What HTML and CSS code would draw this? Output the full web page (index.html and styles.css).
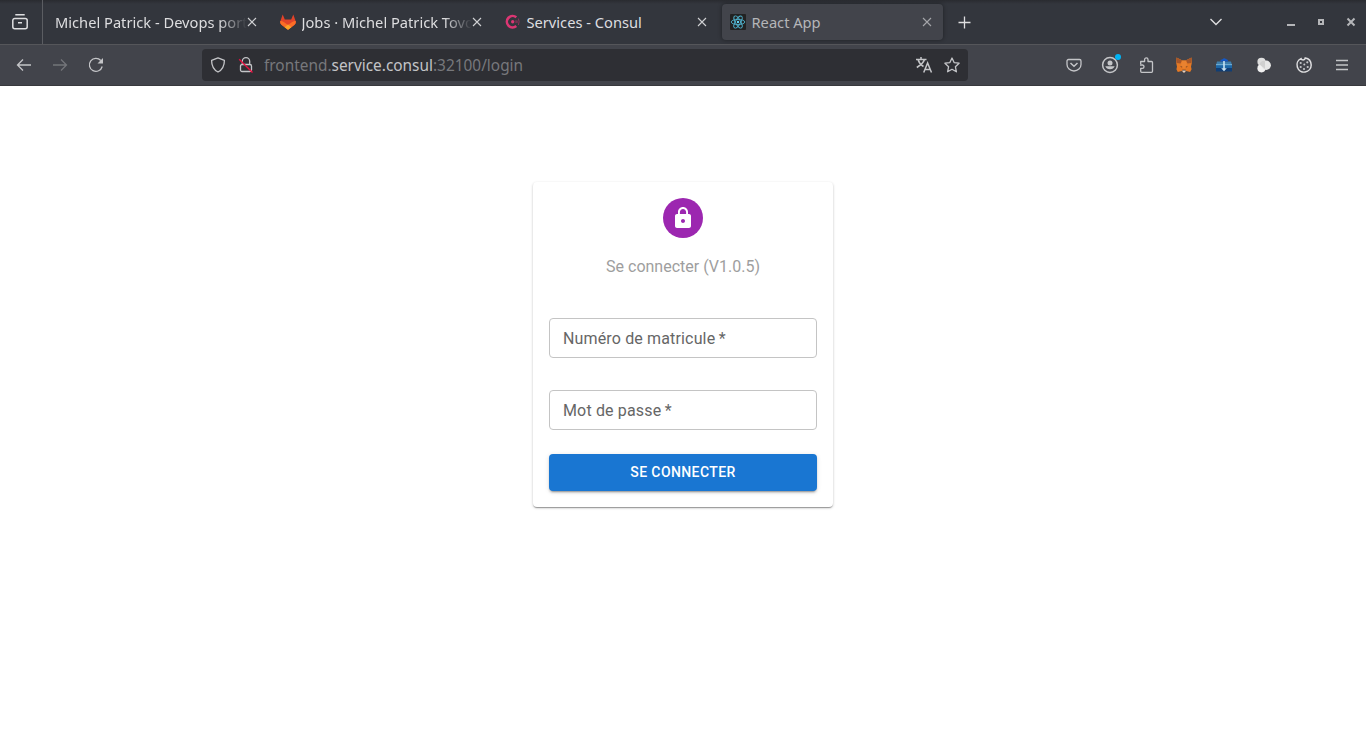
FILE: index.html
```html
<!DOCTYPE html>
<html lang="fr">
<head>
<meta charset="utf-8">
<title>React App</title>
<link rel="stylesheet" href="styles.css">
</head>
<body>
<header class="browser">
  <div class="tabbar">
    <div class="tab-view">
      <svg class="icon" viewBox="0 0 16 16"><path d="M3.300.8h9.400M2.800 4.500h10.400a2 2 0 0 1 2 2v6.200a2 2 0 0 1-2 2H2.800a2 2 0 0 1-2-2V6.500a2 2 0 0 1 2-2zM6 8.700h4" stroke-width="1.500"/></svg>
    </div>
    <div class="tabs">
      <div class="tab">
        <span class="tab-title fade">Michel Patrick - Devops portfolio</span>
        <svg class="close" viewBox="0 0 10 10"><path d="M1 1l8 8M9 1L1 9"/></svg>
      </div>
      <div class="tab">
        <svg class="favicon" viewBox="0 0 16 16"><path fill="#e24329" d="M2.700.4 4.800 5.500h6.400L13.300.4l2.300 6.500c.5 1.600 0 3.200-1.300 4.100L8 15.700 1.700 11C.4 10.100-.1 8.500.4 6.900z"/><path fill="#fc6d26" d="M.3 7C2.700 7.200 4.200 8 8 11c3.800-3 5.300-3.800 7.700-4 .4 1.600-.1 3.100-1.400 4L8 15.700 1.700 11C.4 10.100-.1 8.600.3 7z"/><path fill="#fca326" d="m4.600 13.200 3.400-2.600 3.400 2.600L8 15.700z"/></svg>
        <span class="tab-title fade">Jobs · Michel Patrick Tovoson</span>
        <svg class="close" viewBox="0 0 10 10"><path d="M1 1l8 8M9 1L1 9"/></svg>
      </div>
      <div class="tab">
        <svg class="favicon" viewBox="0 0 16 16"><path d="M11.300 3.300A5.700 5.700 0 1 0 11.300 12" fill="none" stroke="#dc3673" stroke-width="2.600"/><circle cx="7.700" cy="7.700" r="1.700" fill="#dc3673"/><path d="M11 6.300v2.800M13.400 4.600q1.400 3 0 6.400M12.100 6.500v2.400" stroke="#a82f61" fill="none" stroke-width=".8"/></svg>
        <span class="tab-title">Services - Consul</span>
        <svg class="close" viewBox="0 0 10 10"><path d="M1 1l8 8M9 1L1 9"/></svg>
      </div>
      <div class="tab active">
        <svg class="favicon" viewBox="0 0 16 16"><rect width="16" height="16" rx="1" fill="#222"/><g fill="none" stroke="#4fb1cc" stroke-width=".9"><ellipse cx="8" cy="8" rx="6.800" ry="2.600"/><ellipse cx="8" cy="8" rx="6.800" ry="2.600" transform="rotate(60 8 8)"/><ellipse cx="8" cy="8" rx="6.800" ry="2.600" transform="rotate(120 8 8)"/></g><circle cx="8" cy="8" r="1.200" fill="#61dafb"/></svg>
        <span class="tab-title">React App</span>
        <svg class="close" viewBox="0 0 10 10"><path d="M1 1l8 8M9 1L1 9"/></svg>
      </div>
    </div>
    <svg class="icon new-tab" viewBox="0 0 16 16"><path d="M8.500 2.500v12M2.500 8.500h12" stroke-width="1.300"/></svg>
    <svg class="icon list-tabs" viewBox="0 0 16 16"><path d="m2.500 5 5.500 5.500L13.500 5" stroke-width="1.400"/></svg>
    <div class="window-controls">
      <svg viewBox="0 0 10 10"><path d="M1 8h8" stroke-width="2"/></svg>
      <svg viewBox="0 0 10 10"><path d="M3 3h4v4H3z" stroke-width="2"/></svg>
      <svg viewBox="0 0 10 10"><path d="m1.500 1.500 7 7m0-7-7 7" stroke-width="2"/></svg>
    </div>
  </div>
  <div class="toolbar">
    <nav class="nav-buttons">
      <svg class="icon" viewBox="0 0 16 16"><path d="M15 8H1.500M7 2.500 1.500 8 7 13.500"/></svg>
      <svg class="icon disabled" viewBox="0 0 16 16"><path d="M1 8h13.500M9 2.500 14.500 8 9 13.500"/></svg>
      <svg class="icon" viewBox="0 0 16 16"><path d="M14.200 9.500a6.500 6.500 0 1 1-1.400-6"/><path class="solid" d="M15 1v5.500H9.500z"/></svg>
    </nav>
    <div class="urlbar">
      <svg class="icon" viewBox="0 0 16 16"><path d="M8 .9 14.400 3.400c0 5-1.500 9-6.400 11.600C3.100 12.400 1.600 8.400 1.600 3.400z" stroke-linejoin="round"/></svg>
      <svg class="icon lock" viewBox="0 0 16 16"><path d="M4.300 7V4.300a3.700 3.700 0 0 1 7.400 0V7M4 7.500h8a1.500 1.500 0 0 1 1.500 1.500v4a1.500 1.500 0 0 1-1.500 1.500H4A1.500 1.500 0 0 1 2.500 13V9A1.500 1.500 0 0 1 4 7.500z"/><path class="slash" d="m1.200 2.200 13.300 13.300"/></svg>
      <span class="url">frontend.<b>service.consul</b>:32100/login</span>
      <svg class="icon translate" viewBox="0 0 16 16"><path d="M0 2.500h10.500M5 0v2.500M2 2.500c1 3.500 3 5.500 5.500 7M8.500 2.500C7.500 6 4 8.500.8 10.500M7.700 15.500l3.900-9.500 3.900 9.500M9 12.500h5.200" stroke-width="1.500"/></svg>
      <svg class="icon" viewBox="0 0 16 16"><path d="m8 1 2.100 4.600 5 .6-3.700 3.500 1 5.100L8 12.300l-4.400 2.500 1-5.100L.9 6.200l5-.6z" stroke-linejoin="round"/></svg>
    </div>
    <div class="actions">
      <svg class="icon" viewBox="0 0 16 16"><path d="M2.500 2.500h11A1.500 1.500 0 0 1 15 4v3.500a7 6.500 0 0 1-14 0V4a1.500 1.500 0 0 1 1.500-1.500z"/><path d="M4.500 6 8 9.300 11.500 6" stroke-width="1.500"/></svg>
      <span class="account"><svg class="icon" viewBox="0 0 16 16"><circle cx="8" cy="8" r="7.400" stroke-width="1.500"/><circle class="solid" cx="8" cy="5.900" r="2.500"/><path class="solid" d="M3.300 9.200h9.400a5 4.500 0 0 1-9.400 0z"/></svg><i class="dot"></i></span>
      <svg class="icon" viewBox="0 0 16 16"><path d="M2.700 7V4.500h3.900V2.600a1.700 1.700 0 0 1 3.400 0v1.900h3.500a1 1 0 0 1 1 1v8.800a1 1 0 0 1-1 1H3.700a1 1 0 0 1-1-1v-2.900h1.600a1.700 1.700 0 0 0 0-3.400H2" stroke-linejoin="round"/></svg>
      <svg class="icon ext fox" viewBox="0 0 16 16"><path fill="#e57924" d="M.5.500 6 3.300h4L15.500.5l.3 5.500-.8 3.700.6 2.500-1.500 2.900-4-1-2 1.500h-.3l-2-1.500-4 1L.4 12.200l.6-2.500L.2 6z"/><path fill="#a4562a" d="M.5.500 6 3.500 4.500 6.500.6 6zM15.500.5 10 3.500l1.500 3L15.400 6z"/><path fill="#e98230" d="M6 4h4l1 4-3 4-3-4z"/><path fill="#51372b" d="m4 9.200 2.300.6-.5.600zM12 9.200l-2.300.6.5.6zM6.300 12.700h3.400l.3 1.500H6z"/><path fill="#ded4ca" d="M6 13.500h4L8.700 15.500H7.300z"/></svg>
      <svg class="icon ext" viewBox="0 0 16 16"><path fill="#3f7fac" d="M1 4.500h14l1 3.500H0z"/><path fill="#1458c5" d="M4 4.500Q4.500 2.300 6.500 2.200 8 .5 10 2q2 .3 2.500 2.500z"/><path fill="#1d67a6" d="M0 8h16v6H0z"/><path fill="#103e75" d="M0 11h16v3.500H0z"/><path fill="#6ca9cf" d="M0 7h16v1.200H0z"/><path fill="#c6e1f2" d="M7.200 4h1.600v7.300h2L8 14.300l-2.800-3h2z"/></svg>
      <svg class="icon ext" viewBox="0 0 16 16"><circle cx="5.500" cy="4.800" r="4.100" fill="#dedede"/><circle cx="5.500" cy="11.300" r="4.100" fill="#f1f1f1"/><circle cx="10.200" cy="8.200" r="4.700" fill="#e7e7e7"/><path fill="#d0d0d0" d="M3.500 7.500A4.500 4.500 0 0 1 9 4v8q-3-3-5.500-4.500z"/></svg>
      <svg class="icon cookie" viewBox="0 0 16 16"><path d="M5 1.600A7.100 7.100 0 1 0 15.200 8C15 4 12.500 1.300 9.300.9q-.3 2-2.100 2.100Q5.500 3 5 1.600z" stroke-width="1.500"/><g class="solid"><circle cx="4.700" cy="6" r="1.100"/><circle cx="8.300" cy="7.500" r="1"/><circle cx="11.300" cy="5.300" r="1.100"/><circle cx="4.700" cy="10" r="1.100"/><circle cx="8" cy="12" r="1.100"/><circle cx="11.700" cy="10" r="1.100"/></g></svg>
      <svg class="icon" viewBox="0 0 16 16"><path d="M2 3.500h12M2 8h12M2 12.500h12"/></svg>
    </div>
  </div>
</header>
<main class="page">
  <form class="card">
    <div class="avatar"><svg viewBox="0 0 24 24"><path d="M18 8h-1V6c0-2.760-2.240-5-5-5S7 3.240 7 6v2H6c-1.100 0-2 .9-2 2v10c0 1.100.9 2 2 2h12c1.100 0 2-.9 2-2V10c0-1.100-.9-2-2-2zm-6 9c-1.100 0-2-.9-2-2s.9-2 2-2 2 .9 2 2-.9 2-2 2zm3.100-9H8.900V6c0-1.710 1.390-3.100 3.100-3.100s3.100 1.390 3.100 3.100v2z"/></svg></div>
    <h1 class="title">Se connecter (V1.0.5)</h1>
    <label class="field">Numéro de matricule<span class="required">&nbsp;*</span></label>
    <label class="field">Mot de passe<span class="required">&nbsp;*</span></label>
    <button class="submit" type="button">Se connecter</button>
  </form>
</main>
</body>
</html>
```
FILE: styles.css
```css
* { box-sizing: border-box; }
body { margin: 0; background: #fff; height: 731px; overflow: hidden; font-family: Roboto, sans-serif; }
svg { display: block; flex: none; }
.browser { height: 86px; font-family: "Noto Sans", sans-serif; color: #dedee0; }
.tabbar { height: 45px; display: flex; align-items: center; background: linear-gradient(#292b30 0, #33363d 4px, #33363d 100%); border-bottom: 1px solid #55565a; }
.tab-view { width: 43px; height: 44px; padding: 14px 0 0 12px; border-right: 1px solid #5b5d62; }
.icon { width: 16px; height: 16px; fill: none; stroke: #c4c5c8; stroke-width: 1.3; overflow: visible; }
.icon .solid { fill: #c4c5c8; stroke: none; }
.tab-view .icon, .new-tab, .list-tabs { stroke: #dedee0; }
.tabs { display: flex; gap: 4px; margin-left: 4px; }
.tab { width: 221px; height: 36px; display: flex; align-items: center; padding: 0 11px 0 8px; border-radius: 4px; font-size: 14.67px; }
.tab.active { background: #42444b; color: #b5b6b9; box-shadow: 0 0 4px rgba(0, 0, 0, .4); }
.tab-title { flex: 1; min-width: 0; overflow: hidden; white-space: nowrap; line-height: 22px; }
.fade { -webkit-mask-image: linear-gradient(to left, transparent, #000 28px); mask-image: linear-gradient(to left, transparent, #000 28px); }
.favicon { width: 16px; height: 16px; margin-right: 5.5px; }
.close { width: 10px; height: 10px; fill: none; stroke: #d0d1d4; stroke-width: 1.1; }
.active .close { stroke: #a5a6aa; }
.new-tab { margin-left: 13px; }
.list-tabs { margin-left: auto; }
.window-controls { display: flex; gap: 20px; margin: 0 10px 0 62px; }
.window-controls svg { width: 10px; height: 10px; fill: none; stroke: #b5b6b9; }
.toolbar { height: 41px; display: flex; align-items: center; background: #42444b; border-bottom: 1px solid #38393d; }
.nav-buttons { width: 202px; display: flex; gap: 20px; padding-left: 16px; }
.disabled { stroke: #73757a; }
.urlbar { width: 766px; height: 32px; display: flex; align-items: center; padding: 0 8px; border-radius: 4px; background: #2e2f34; }
.lock { margin-left: 12px; }
.lock .slash { stroke: #e5103f; stroke-width: 1.4; }
.url { flex: 1; margin-left: 10px; padding-top: 2px; font-size: 15.4px; line-height: 22px; color: #77787c; white-space: nowrap; }
.url b { font-weight: 400; color: #c3c4c7; }
.translate { margin-right: 12px; }
.actions { display: flex; align-items: center; gap: 20px; margin-left: 98px; }
.account { position: relative; }
.dot { position: absolute; top: -3px; right: -3px; width: 6px; height: 6px; border-radius: 50%; background: #00b3f4; }
.ext { stroke: none; }
.fox { margin-left: 2px; }
.ext { margin-right: 4px; }
.cookie.icon { margin-right: 2px; stroke: #dedee0; }
.page { display: flex; justify-content: center; padding-top: 96px; }
.card { width: 300px; height: 325px; padding: 16px; display: flex; flex-direction: column; align-items: center; border-radius: 4px; background: #fff; box-shadow: 0 2px 1px -1px rgba(0,0,0,.2), 0 1px 1px rgba(0,0,0,.14), 0 1px 3px rgba(0,0,0,.2); }
.avatar { width: 40px; height: 40px; display: grid; place-items: center; border-radius: 50%; background: #9c27b0; }
.avatar svg { width: 24px; height: 24px; fill: #fff; }
.title { margin: 17px 0 40px; font-size: 16px; font-weight: 400; line-height: 23px; color: #9e9e9e; }
.field { width: 100%; height: 40px; flex: none; padding: 0 13px; margin-bottom: 32px; border: 1px solid #c4c4c4; border-radius: 4px; font-size: 16px; line-height: 39px; letter-spacing: .15px; color: #666; }
.required { margin-left: -.7px; }
.submit { width: 100%; height: 37px; margin-top: -8px; padding: 0 0 1px; border: 0; border-radius: 4px; background: #1976d2; color: #fff; font: 500 14px/36px Roboto, sans-serif; letter-spacing: .4px; text-transform: uppercase; box-shadow: 0 3px 1px -2px rgba(0,0,0,.2), 0 2px 2px rgba(0,0,0,.14), 0 1px 5px rgba(0,0,0,.12); }
```
